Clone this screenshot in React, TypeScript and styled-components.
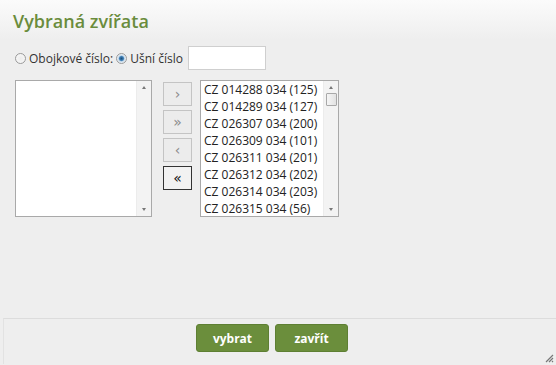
import React, { useState } from 'react'
import styled, { createGlobalStyle } from 'styled-components'

const GlobalStyle = createGlobalStyle`
    html, body {
        margin: 0;
        padding: 0;
        background: #eeeeee;
    }
    body {
        font-family: "Open Sans", "DejaVu Sans", sans-serif;
        font-size: 12px;
        color: #333;
    }
`;

const Dialog = styled.div`
    width: 556px;
    height: 365px;
    display: flex;
    flex-direction: column;
    background: #eeeeee;
    box-sizing: border-box;
    position: relative;
`;

const Header = styled.div`
    height: 40px;
    padding: 9px 13px 0;
    box-sizing: border-box;
    background: linear-gradient(to bottom, #fbfbfb 0%, #f6f6f6 40%, #eeeeee 100%);
`;

const Title = styled.h1`
    margin: 0;
    font-size: 18px;
    font-weight: 600;
    line-height: 24px;
    color: #6a8c3c;
`;

const Content = styled.div`
    flex: 1;
    padding: 6px 15px 0;
    display: flex;
    flex-direction: column;
`;

const RadioRow = styled.div`
    display: flex;
    align-items: center;
    height: 24px;
    margin-bottom: 10px;
`;

const RadioLabel = styled.label`
    display: flex;
    align-items: center;
    margin-right: 3px;
    color: #333;
`;

const Radio = styled.span<{ $checked?: boolean }>`
    width: 11px;
    height: 11px;
    border-radius: 50%;
    box-sizing: border-box;
    border: 1px solid #9a9a9a;
    background: ${p => p.$checked
        ? 'radial-gradient(circle, #1d4f7a 0, #3f7fb6 2px, #cfe0ee 3.2px, #f4f4f4 5px)'
        : 'radial-gradient(circle, #ececec 0, #f7f7f7 5px)'};
    margin-right: 3px;
`;

const TextInput = styled.input`
    width: 78px;
    height: 24px;
    box-sizing: border-box;
    margin-left: 2px;
    border: 1px solid #cfcfcf;
    background: #fff;
    outline: none;
    font-family: inherit;
`;

const Picker = styled.div`
    display: flex;
    align-items: flex-start;
`;

const ListBox = styled.div<{ $width: number }>`
    width: ${p => p.$width}px;
    height: 137px;
    box-sizing: border-box;
    border: 1px solid #a9a9a9;
    background: #fff;
    display: flex;
`;

const Items = styled.ul`
    flex: 1;
    margin: 0;
    padding: 0 0 0 3px;
    list-style: none;
    overflow: hidden;
`;

const Item = styled.li`
    height: 17px;
    line-height: 17px;
    font-size: 12px;
    color: #222;
    white-space: nowrap;
`;

const ScrollBar = styled.div`
    width: 14px;
    flex-shrink: 0;
    border-left: 1px solid #ececec;
    background: #f3f3f3;
    display: flex;
    flex-direction: column;
    align-items: center;
`;

const Arrow = styled.span<{ $down?: boolean }>`
    width: 0;
    height: 0;
    margin: ${p => (p.$down ? 'auto 0 5px' : '5px 0 0')};
    border-left: 2.5px solid transparent;
    border-right: 2.5px solid transparent;
    ${p => p.$down ? 'border-top: 3px solid #777;' : 'border-bottom: 3px solid #777;'}
`;

const Thumb = styled.div`
    width: 11px;
    height: 13px;
    margin-top: 4px;
    box-sizing: border-box;
    border: 1px solid #a8a8a8;
    border-radius: 1px;
    background: linear-gradient(to right, #f5f5f5, #e2e2e2);
`;

const MoveButtons = styled.div`
    width: 29px;
    margin: 2px 8px 0 11px;
    display: flex;
    flex-direction: column;
    gap: 4px;
`;

const MoveButton = styled.button<{ $active?: boolean }>`
    height: 24px;
    padding: 0;
    box-sizing: border-box;
    border: 1px solid ${p => (p.$active ? '#333' : '#c4c4c4')};
    background: ${p => (p.$active ? '#f2f2f2' : '#ececec')};
    color: ${p => (p.$active ? '#111' : '#8a8a8a')};
    font-family: "DejaVu Sans", sans-serif;
    font-size: 14px;
    line-height: 20px;
    cursor: pointer;
`;

const Footer = styled.div`
    height: 46px;
    margin: 0 0 1px 3px;
    border-top: 1px solid #dcdcdc;
    border-left: 1px solid #e2e2e2;
    display: flex;
    justify-content: center;
    padding: 5px 18px 0 2px;
    gap: 6px;
    box-sizing: border-box;
`;

const ActionButton = styled.button`
    width: 73px;
    height: 28px;
    border: 1px solid #5e7f33;
    border-radius: 3px;
    background: #6b8e3c;
    color: #fff;
    font-family: "Open Sans", sans-serif;
    font-weight: 700;
    font-size: 12px;
    cursor: pointer;
`;

const Grip = styled.svg`
    position: absolute;
    right: 2px;
    bottom: 2px;
`;

const animals = [
    'CZ 014288 034 (125)',
    'CZ 014289 034 (127)',
    'CZ 026307 034 (200)',
    'CZ 026309 034 (101)',
    'CZ 026311 034 (201)',
    'CZ 026312 034 (202)',
    'CZ 026314 034 (203)',
    'CZ 026315 034 (56)',
];

const ScrollTrack: React.FC<{ thumb?: boolean }> = ({ thumb }) => (
    <ScrollBar>
        <Arrow />
        {thumb && <Thumb />}
        <Arrow $down />
    </ScrollBar>
);

export default function App() {
    const [ear, setEar] = useState(true);

    return (
        <Dialog>
            <GlobalStyle />
            <Header>
                <Title>Vybraná zvířata</Title>
            </Header>
            <Content>
                <RadioRow>
                    <RadioLabel onClick={() => setEar(false)}>
                        <Radio $checked={!ear} />
                        Obojkové číslo:
                    </RadioLabel>
                    <RadioLabel onClick={() => setEar(true)}>
                        <Radio $checked={ear} />
                        Ušní číslo
                    </RadioLabel>
                    <TextInput />
                </RadioRow>
                <Picker>
                    <ListBox $width={137}>
                        <Items />
                        <ScrollTrack />
                    </ListBox>
                    <MoveButtons>
                        <MoveButton>›</MoveButton>
                        <MoveButton>»</MoveButton>
                        <MoveButton>‹</MoveButton>
                        <MoveButton $active>«</MoveButton>
                    </MoveButtons>
                    <ListBox $width={139}>
                        <Items>
                            {animals.map(a => <Item key={a}>{a}</Item>)}
                        </Items>
                        <ScrollTrack thumb />
                    </ListBox>
                </Picker>
            </Content>
            <Footer>
                <ActionButton>vybrat</ActionButton>
                <ActionButton>zavřít</ActionButton>
            </Footer>
            <Grip width="10" height="10" viewBox="0 0 10 10">
                <path d="M9 2 L2 9 M9 5 L5 9 M9 8 L8 9" stroke="#777" strokeWidth="1.2" />
            </Grip>
        </Dialog>
    );
}
